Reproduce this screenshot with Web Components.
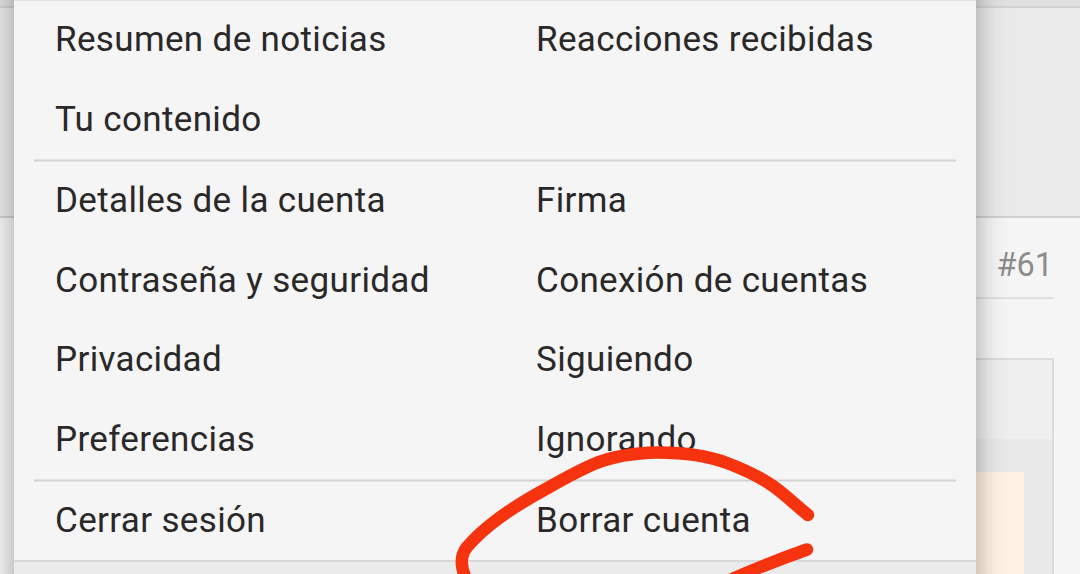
<!DOCTYPE html>
<html lang="es">
<head>
<meta charset="utf-8">
<title>Cuenta</title>
<style>
  html, body {
    margin: 0;
    height: 574px;
    overflow: hidden;
    background: #f5f5f5;
    font-family: Roboto, "Liberation Sans", sans-serif;
  }
  body {
    position: relative;
  }
</style>
</head>
<body>
<forum-page>
  <forum-post number="#61"></forum-post>
</forum-page>
<account-menu>
  <menu-section style="--rows: 80px 78px">
    <menu-link>Resumen de noticias</menu-link>
    <menu-link>Reacciones recibidas</menu-link>
    <menu-link>Tu contenido</menu-link>
  </menu-section>
  <menu-section style="--rows: 3px 80px 79px 80px 78px">
    <menu-link>Detalles de la cuenta</menu-link>
    <menu-link>Firma</menu-link>
    <menu-link>Contraseña y seguridad</menu-link>
    <menu-link>Conexión de cuentas</menu-link>
    <menu-link>Privacidad</menu-link>
    <menu-link>Siguiendo</menu-link>
    <menu-link>Preferencias</menu-link>
    <menu-link>Ignorando</menu-link>
  </menu-section>
  <menu-section style="--rows: 3px 78px">
    <menu-link>Cerrar sesión</menu-link>
    <menu-link>Borrar cuenta</menu-link>
  </menu-section>
</account-menu>
<pen-mark></pen-mark>

<script>
function define(name, markup, setup) {
  customElements.define(name, class extends HTMLElement {
    constructor() {
      super();
      this.attachShadow({ mode: 'open' }).innerHTML = markup;
    }

    connectedCallback() {
      if (setup) setup(this);
    }
  });
}

// Page behind the menu
define('forum-page', `
  <style>
    :host {
      display: flex;
      flex-direction: column;
      height: 574px;
      overflow: hidden;
    }
    .strip {
      flex: none;
      height: 6px;
      background: #e1e1e1;
      border-bottom: 2px solid #d3d3d3;
    }
    .user {
      flex: none;
      height: 208px;
      background: #eaeaea;
      border-bottom: 2px solid #d0d0d0;
    }
  </style>
  <div class="strip"></div>
  <div class="user"></div>
  <slot></slot>
`);

define('forum-post', `
  <style>
    :host {
      display: flex;
      flex-direction: column;
      flex: 1;
      min-height: 0;
      margin: 0 26px;
      overflow: hidden;
    }
    header {
      flex: none;
      box-sizing: border-box;
      height: 81px;
      padding-right: 1px;
      border-bottom: 2px solid #dfdfdf;
      text-align: right;
      font-size: 32.5px;
      line-height: 95px;
      color: #8c8c8c;
    }
    .quote {
      display: flex;
      flex-direction: column;
      flex: 1;
      margin-top: 59px;
      border: 2px solid #dcdcdc;
      border-bottom: 0;
      background: #e9e9e9;
    }
    .title {
      height: 79px;
      background: #efefef;
    }
    .note {
      flex: 1;
      margin: 33px 28px 0;
      background: #fff2e4;
    }
  </style>
  <header></header>
  <div class="quote">
    <div class="title"></div>
    <div class="note"></div>
  </div>
`, el => {
  el.shadowRoot.querySelector('header').textContent = el.getAttribute('number');
});

// Floating menu
define('account-menu', `
  <style>
    :host {
      position: absolute;
      top: 0;
      left: 14px;
      display: flex;
      flex-direction: column;
      box-sizing: border-box;
      width: 962px;
      height: 574px;
      border-top: 1px solid #e2e2e2;
      background: #f5f5f5;
    }
    /* even shade along both sides */
    :host::before, :host::after {
      content: "";
      position: absolute;
      top: -1px;
      bottom: 0;
      width: 36px;
      background: linear-gradient(to var(--side), rgba(0, 0, 0, .18), rgba(0, 0, 0, .13) 14%, rgba(0, 0, 0, .07) 33%, rgba(0, 0, 0, .025) 58%, rgba(0, 0, 0, .006) 80%, transparent);
    }
    :host::before {
      --side: left;
      right: 100%;
    }
    :host::after {
      --side: right;
      left: 100%;
    }
    .footer {
      flex: 1;
      border-top: 2px solid #d8d8d8;
      background: #ebebeb;
    }
  </style>
  <slot></slot>
  <div class="footer"></div>
`);

define('menu-section', `
  <style>
    :host {
      display: grid;
      flex: none;
      grid-template-columns: 481px 481px;
      grid-template-rows: var(--rows);
    }
    :host(:not(:first-child))::before {
      content: "";
      grid-column: 1 / -1;
      margin: 0 20px;
      background: linear-gradient(#e4e4e4 1px, #d3d3d3 1px 2px, #e4e4e4 2px);
    }
  </style>
  <slot></slot>
`);

define('menu-link', `
  <style>
    :host {
      display: block;
      padding-left: 41px;
      font-size: 35px;
      line-height: 77px;
      letter-spacing: .35px;
      white-space: nowrap;
      color: #2a2828;
    }
  </style>
  <slot></slot>
`);

// Hand-drawn circle around the last link
define('pen-mark', `
  <style>
    :host {
      position: absolute;
      inset: 0;
      pointer-events: none;
    }
    svg {
      display: block;
    }
  </style>
  <svg width="1080" height="574" viewBox="0 0 1080 574" fill="none" stroke="#f6330f" stroke-width="12.5" stroke-linecap="round" stroke-linejoin="round">
    <path d="M808 515C794 504 784 493 770 484C757 475.500 743 469 727 463C706 455 684 452.500 658 452.500C632 453 613 456 594 464C575 472 555 484 535 495C511 509 486 525 467 547C459 557 461 570 468 582"/>
    <path d="M807 549.500C783 558 759 567 730 580"/>
  </svg>
`);
</script>
</body>
</html>
